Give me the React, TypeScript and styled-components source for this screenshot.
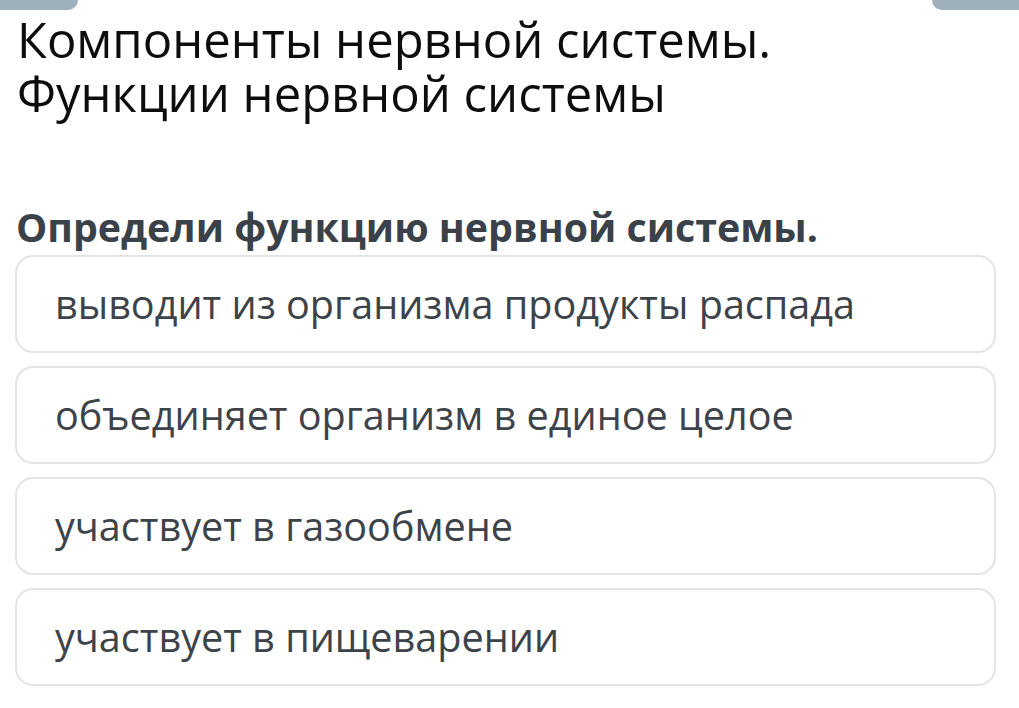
import React from "react";
import styled, { createGlobalStyle } from "styled-components";

const GlobalStyle = createGlobalStyle`
  html, body {
    margin: 0;
    padding: 0;
    background: #ffffff;
  }
  body {
    font-family: "Open Sans", "Noto Sans", sans-serif;
  }
`;

const Page = styled.div`
  width: 1019px;
  height: 708px;
  overflow: hidden;
  display: flex;
  flex-direction: column;
`;

const TabRow = styled.div`
  display: flex;
  justify-content: space-between;
  height: 10px;
`;

const Tab = styled.div<{ $side: "left" | "right" }>`
  width: ${(p) => (p.$side === "left" ? "78px" : "87px")};
  height: 10px;
  background-color: #9fb0bd;
  border-radius: ${(p) => (p.$side === "left" ? "0 0 12px 0" : "0 0 0 12px")};
`;

const Content = styled.div`
  padding: 0 23px 0 15px;
  display: flex;
  flex-direction: column;
`;

const Title = styled.h1`
  margin: 2px 0 0 2px;
  font-size: 49px;
  line-height: 54px;
  font-weight: 400;
  color: #0d0d0d;
`;

const Question = styled.h2`
  margin: 81px 0 2px 1px;
  font-size: 39.3px;
  line-height: 52px;
  font-weight: 700;
  color: #3a4149;
`;

const Options = styled.ul`
  list-style: none;
  margin: 0;
  padding: 0;
  display: flex;
  flex-direction: column;
  gap: 13px;
`;

const Option = styled.li`
  height: 94px;
  border: 2px solid #e3e4e5;
  border-radius: 18px;
  display: flex;
  align-items: center;
  padding: 0 38px;
  font-size: 39.6px;
  color: #3d4349;
  box-sizing: content-box;
`;

export default function App() {
  const answers = [
    "выводит из организма продукты распада",
    "объединяет организм в единое целое",
    "участвует в газообмене",
    "участвует в пищеварении",
  ];
  return (
    <Page>
      <GlobalStyle />
      <TabRow>
        <Tab $side="left" />
        <Tab $side="right" />
      </TabRow>
      <Content>
        <Title>
          Компоненты нервной системы.
          <br />
          Функции нервной системы
        </Title>
        <Question>Определи функцию нервной системы.</Question>
        <Options>
          {answers.map((text, index) => (
            <Option key={index}>{text}</Option>
          ))}
        </Options>
      </Content>
    </Page>
  );
}
